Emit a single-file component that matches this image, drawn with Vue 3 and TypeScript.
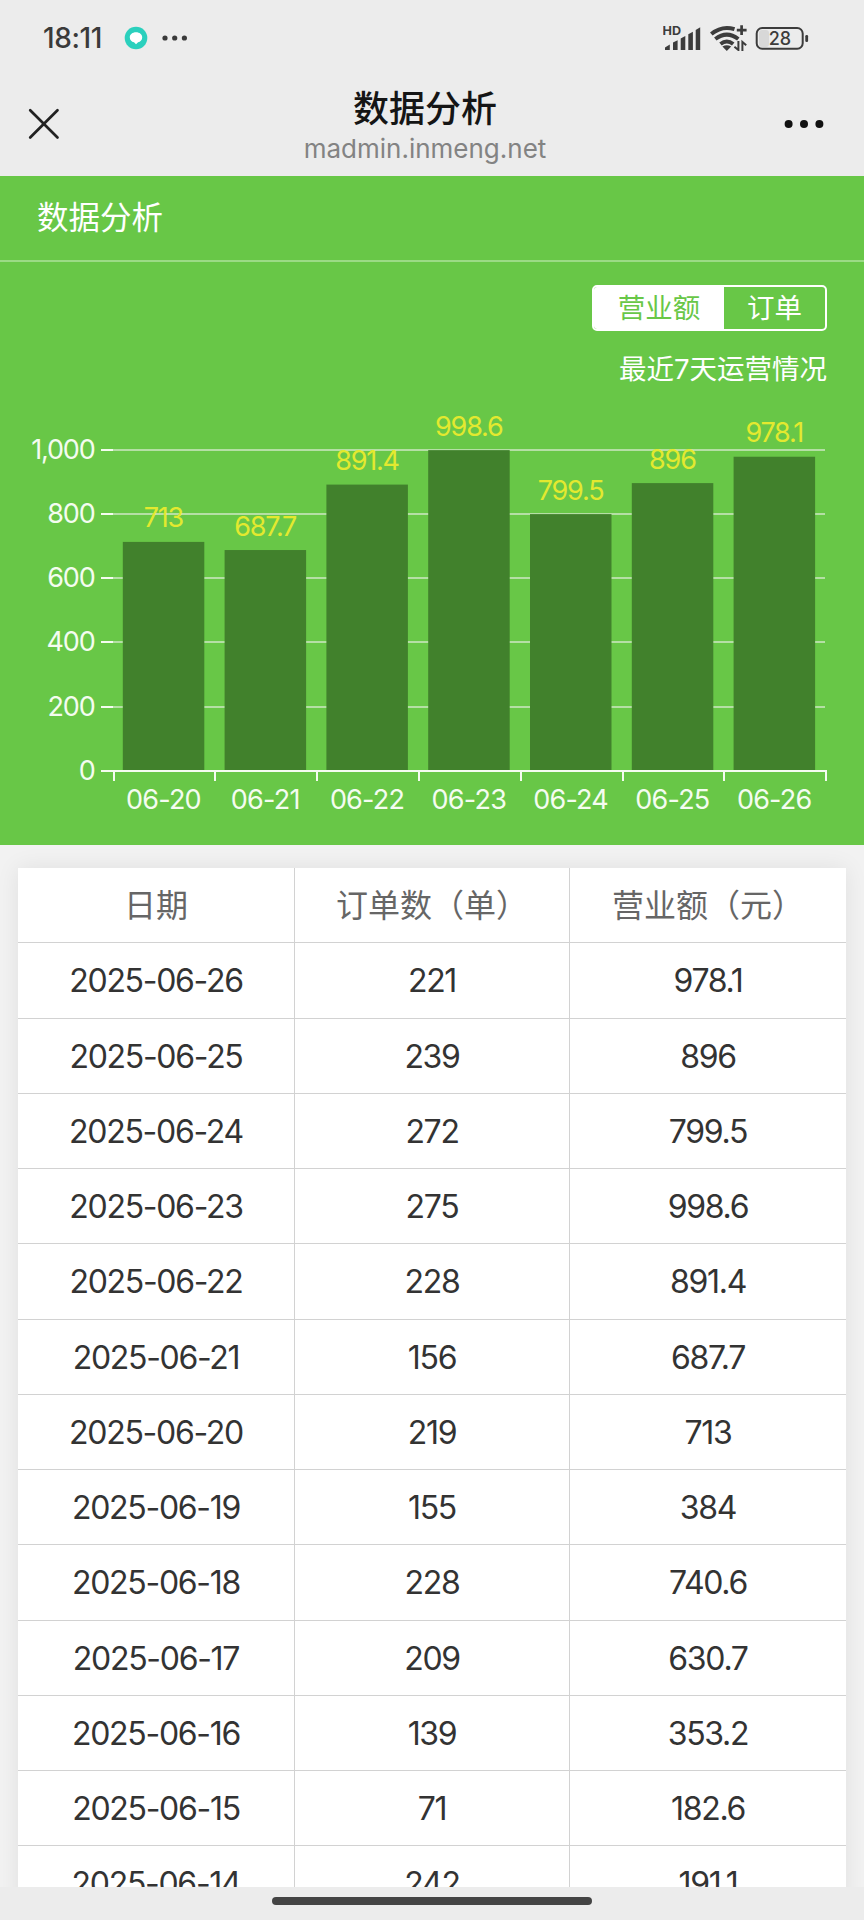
<script setup lang="ts">
interface DayRecord {
  date: string
  orders: number
  revenue: number
}

const records: DayRecord[] = [
  { date: '2025-06-26', orders: 221, revenue: 978.1 },
  { date: '2025-06-25', orders: 239, revenue: 896 },
  { date: '2025-06-24', orders: 272, revenue: 799.5 },
  { date: '2025-06-23', orders: 275, revenue: 998.6 },
  { date: '2025-06-22', orders: 228, revenue: 891.4 },
  { date: '2025-06-21', orders: 156, revenue: 687.7 },
  { date: '2025-06-20', orders: 219, revenue: 713 },
  { date: '2025-06-19', orders: 155, revenue: 384 },
  { date: '2025-06-18', orders: 228, revenue: 740.6 },
  { date: '2025-06-17', orders: 209, revenue: 630.7 },
  { date: '2025-06-16', orders: 139, revenue: 353.2 },
  { date: '2025-06-15', orders: 71, revenue: 182.6 },
  { date: '2025-06-14', orders: 242, revenue: 191.1 },
]

// Chart geometry, in the units of the svg viewBox
const base = 371
const unit = 0.3213
const left = 113.5
const step = 101.8

const bars = records
  .slice(0, 7)
  .reverse()
  .map((r, i) => ({
    label: r.date.slice(5),
    value: r.revenue,
    x: 122.8 + i * step,
    mid: 163.4 + i * step,
    top: base - r.revenue * unit,
  }))

const levels = [0, 200, 400, 600, 800, 1000].map((v) => ({
  text: v.toLocaleString('en-US'),
  y: Math.round(base - v * unit),
}))

const ticks = Array.from({ length: 8 }, (_, i) => Math.round(left + i * step))
</script>

<template>
  <div class="screen">
    <div class="status">
      <span class="time">18:11</span>
      <svg class="chat" width="24" height="24" viewBox="0 0 24 24">
        <circle cx="12" cy="12" r="11.3" fill="#2bd0bd" />
        <path d="M12 6.3c3.6 0 6.2 2.2 6.2 5.1 0 2.4-1.700 4.200-4.100 4.900L12 18.200l-2-1.900c-2.500-.7-4.200-2.500-4.200-4.900 0-2.900 2.600-5.100 6.200-5.100z" fill="#fff" />
      </svg>
      <svg class="more-small" width="26" height="6" viewBox="0 0 26 6">
        <g fill="#3a3a3a"><circle cx="3" cy="3" r="2.600" /><circle cx="12.700" cy="3" r="2.600" /><circle cx="22.400" cy="3" r="2.600" /></g>
      </svg>
      <svg class="indicators" width="150" height="30" viewBox="0 0 150 30">
        <text x="-.5" y="14.300" class="hd" textLength="18.500" lengthAdjust="spacingAndGlyphs">HD</text>
        <g fill="#3c3c3c">
          <path d="M2 29v-2.500l4.800-3V29z" />
          <path d="M10 29v-7.500l4.600-2.300V29z" />
          <path d="M17.700 29V17.500l4.600-2.500V29z" />
          <path d="M25.300 29V13.200l4.600-2.500V29z" />
          <path d="M32.700 29V9l4.500-2.700V29z" />
        </g>
        <g fill="none" stroke="#3c3c3c" stroke-width="4">
          <path d="M48.300 13Q59 4.200 71.500 8.200" />
          <path d="M52.300 18Q63.800 9.300 75.300 18" />
          <path d="M57.500 23Q63.800 17.900 70.200 23" />
        </g>
        <path d="M59.400 25.600q4.400-2.600 8.800 0L63.800 30z" fill="#3c3c3c" />
        <path d="M78.600 4.300v9.600M73.800 9.100h9.800" stroke="#3c3c3c" stroke-width="2.700" fill="none" />
        <path d="M75.400 20v9l-4-3.200M79.400 30v-9l3.800 3.200" stroke="#3c3c3c" stroke-width="2" fill="none" />
        <rect x="96" y="9" width="10" height="17" rx="3" fill="#d8d8d8" />
        <rect x="93.700" y="7" width="46" height="20.700" rx="5.500" fill="none" stroke="#3c3c3c" stroke-width="2" />
        <rect x="142.300" y="14" width="2.800" height="7" rx="1.200" fill="#3c3c3c" />
        <text x="117" y="23.500" class="level" text-anchor="middle">28</text>
      </svg>
    </div>

    <header class="nav">
      <svg class="close" width="32" height="32" viewBox="0 0 32 32">
        <path d="M2.200 2.200 29.500 29.500M29.500 2.200 2.200 29.500" stroke="#222" stroke-width="2.700" stroke-linecap="round" />
      </svg>
      <div class="heading">
        <h1>数据分析</h1>
        <p>madmin.inmeng.net</p>
      </div>
      <svg class="more" width="40" height="8" viewBox="0 0 40 8">
        <g fill="#111"><circle cx="4.600" cy="4" r="4" /><circle cx="20" cy="4" r="4" /><circle cx="35.400" cy="4" r="4" /></g>
      </svg>
    </header>

    <section class="panel">
      <h2>数据分析</h2>
      <div class="switcher">
        <button class="tab on">营业额</button>
        <button class="tab">订单</button>
      </div>
      <p class="caption">最近7天运营情况</p>
      <svg class="chart" width="864" height="445" viewBox="0 0 864 445">
        <g v-for="l in levels" :key="l.text">
          <rect x="113" :y="l.y - 1" width="712" height="2" fill="#b5dfa5" />
          <rect x="101" :y="l.y - 1" width="12" height="2" fill="#f4fcf0" />
          <text x="94.500" :y="l.y + 8.500" class="axis" text-anchor="end">{{ l.text }}</text>
        </g>
        <rect v-for="b in bars" :key="b.label" :x="b.x" :y="b.top" width="81.500" :height="base - b.top" fill="#41812c" />
        <rect x="101" :y="base - 1" width="726" height="2" fill="#f4fcf0" />
        <rect v-for="t in ticks" :key="t" :x="t - 1" :y="base" width="2" height="10" fill="#f4fcf0" />
        <g v-for="b in bars" :key="b.label">
          <text :x="b.mid" :y="base + 38" class="axis day" text-anchor="middle">{{ b.label }}</text>
          <text :x="b.mid" :y="b.top - 14.500" class="axis value" text-anchor="middle">{{ b.value }}</text>
        </g>
      </svg>
    </section>

    <main class="body">
      <div class="table">
        <div class="row head"><span>日期</span><span>订单数（单）</span><span>营业额（元）</span></div>
        <div v-for="r in records" :key="r.date" class="row">
          <span>{{ r.date }}</span><span>{{ r.orders }}</span><span>{{ r.revenue }}</span>
        </div>
      </div>
    </main>

    <footer class="home"><i></i></footer>
  </div>
</template>

<style>
body {
  margin: 0;
}
</style>

<style scoped>
.screen {
  width: 864px;
  height: 1920px;
  display: flex;
  flex-direction: column;
  overflow: hidden;
  background: #f2f2f2;
  color: #333;
  font-family: Inter, "Noto Sans CJK SC", sans-serif;
}
h1, h2, p {
  margin: 0;
  font-weight: 400;
}
.status {
  height: 75px;
  flex: none;
  display: flex;
  align-items: center;
  background: #ececec;
  padding: 0 51px 0 43px;
}
.time {
  width: 81px;
  font-size: 28px;
  font-weight: 500;
  letter-spacing: -0.4px;
  color: #3a3a3a;
}
.more-small {
  margin-left: 14px;
}
.indicators {
  margin: -17px 0 0 auto;
  position: relative;
  top: 7px;
  flex: none;
}
.hd {
  font-size: 12px;
  font-weight: 700;
  fill: #3c3c3c;
}
.level {
  font-size: 18px;
  font-weight: 500;
  fill: #3c3c3c;
}
.nav {
  height: 101px;
  flex: none;
  display: flex;
  align-items: center;
  justify-content: space-between;
  background: #ececec;
  padding: 0 40px 0 28px;
  box-sizing: border-box;
}
.nav svg {
  margin-bottom: 4px;
}
.heading {
  text-align: center;
  margin-left: 6px;
}
h1 {
  font-size: 36px;
  line-height: 46px;
  font-weight: 500;
  color: #151515;
}
.heading p {
  font-size: 26px;
  line-height: 34px;
  color: #838383;
}
.panel {
  height: 669px;
  flex: none;
  display: flex;
  flex-direction: column;
  background: #68c747;
  color: #fff;
}
h2 {
  height: 84px;
  line-height: 84px;
  padding-left: 37px;
  font-size: 31.500px;
  border-bottom: 2px solid #9bdb85;
}
.switcher {
  display: flex;
  align-self: flex-end;
  box-sizing: border-box;
  width: 235px;
  height: 46px;
  margin: 23px 37px 0 0;
  border: 2px solid #fff;
  border-radius: 5px;
  overflow: hidden;
}
.tab {
  flex: 1;
  border: 0;
  padding: 0;
  background: none;
  color: #fff;
  font: inherit;
  font-size: 27.500px;
  line-height: 42px;
}
.tab.on {
  flex: none;
  width: 130px;
  background: #fff;
  color: #68c747;
}
.caption {
  margin: 18px 37px 0 0;
  height: 40px;
  line-height: 40px;
  text-align: right;
  font-size: 27.500px;
}
.chart {
  margin-top: 11px;
  flex: none;
}
.axis {
  font-size: 27px;
  letter-spacing: -1.200px;
  fill: #f4fcf0;
}
.value {
  fill: #e3e92f;
}
.day {
  letter-spacing: -0.800px;
}
.body {
  flex: 1;
  min-height: 0;
  overflow: hidden;
  padding: 23px 18px 0;
}
.table {
  background: #fff;
  box-shadow: 0 0 22px rgba(0, 0, 0, 0.080);
}
.row {
  display: grid;
  grid-template-columns: 276px 275px 1fr;
  height: 75.250px;
  box-sizing: border-box;
  border-bottom: 1px solid #d2d2d2;
  font-size: 32px;
  letter-spacing: -1.300px;
  line-height: 75px;
  text-align: center;
}
.row span + span {
  border-left: 1px solid #d2d2d2;
}
.head {
  color: #666;
  letter-spacing: 0;
}
.home {
  height: 33px;
  flex: none;
  display: flex;
  justify-content: center;
  background: #ececec;
}
.home i {
  width: 320px;
  height: 8px;
  margin-top: 10px;
  border-radius: 4px;
  background: #444;
}
</style>
